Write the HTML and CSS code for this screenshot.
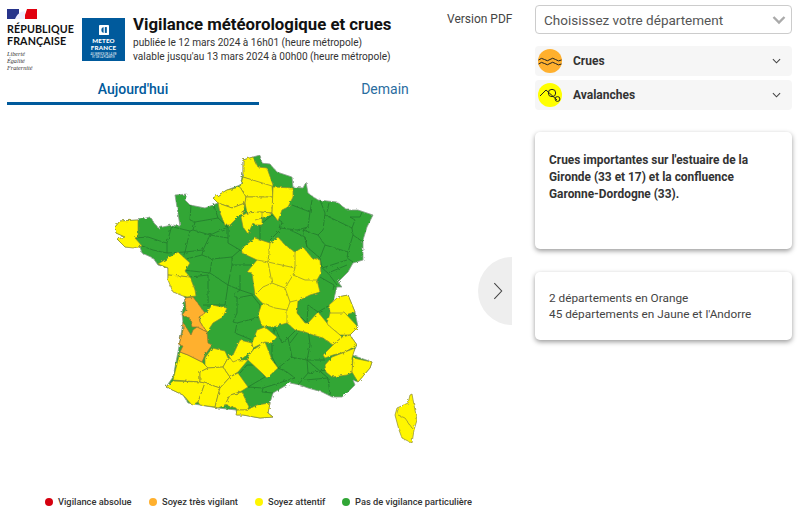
FILE: index.html
```html
<!DOCTYPE html>
<html lang="fr">
<head>
<meta charset="utf-8">
<title>Vigilance météorologique et crues</title>
<link rel="stylesheet" href="styles.css">
</head>
<body>
<div class="page">
  <main class="left">
    <header class="head">
      <div class="rf">
        <svg class="flag" viewBox="0 0 30 10"><rect width="12" height="10" fill="#27348b"/><rect x="12" width="6" height="10" fill="#fff"/><rect x="18" width="12" height="10" fill="#e1000f"/><path d="M8 10 Q10 5 14 3 L18 2 L18 10Z" fill="#eef"/><path d="M18 0 L20 0 L18 6 Z" fill="#fff"/></svg>
        <div class="rf-name">RÉPUBLIQUE<br>FRANÇAISE</div>
        <div class="rf-motto">Liberté<br>Égalité<br>Fraternité</div>
      </div>
      <div class="mf">
        <svg class="mf-icon" viewBox="0 0 12 12"><rect width="12" height="12" rx="1" fill="#fff"/><path d="M5.5 2.5 A3.6 3.6 0 0 0 5.5 9.5 Z" fill="#005a9c"/><rect x="7" y="2.5" width="2.4" height="7" fill="#005a9c"/></svg>
        <div class="mf-name">METEO<br>FRANCE</div>
        <div class="mf-tag">AU SERVICE DE LA VIE<br>ET DE LA PLANÈTE</div>
      </div>
      <div class="titles">
        <h1>Vigilance météorologique et crues</h1>
        <p>publiée le 12 mars 2024 à 16h01 (heure métropole)</p>
        <p>valable jusqu'au 13 mars 2024 à 00h00 (heure métropole)</p>
      </div>
      <a class="pdf">Version PDF</a>
    </header>
    <nav class="tabs">
      <div class="tab active">Aujourd'hui</div>
      <div class="tab">Demain</div>
    </nav>
    <div class="map-wrap">
      <svg class="map" viewBox="0 105 512 384">
        <defs>
          <filter id="rough" x="0" y="0" width="100%" height="100%" filterUnits="objectBoundingBox">
            <feTurbulence type="fractalNoise" baseFrequency="0.28" numOctaves="2" seed="4" result="n"/>
            <feDisplacementMap in="SourceGraphic" in2="n" scale="3"/>
          </filter>
        </defs>
        <g class="rough">
        <polygon class="green" points="115,227 120,221 138,220 150,217 158,228 172,225 180,226 175,195 187,194 185,200 190,205 205,208 218,203 213,198 227,190 240,185 243,173 243,160 253,157 260,155 262,163 270,164 277,172 292,177 293,187 303,188 306,182 308,193 318,200 337,202 347,210 358,210 373,215 367,227 363,240 363,260 353,263 348,272 338,282 342,287 337,287 333,302 338,297 348,295 355,312 358,327 350,335 357,345 352,355 372,362 370,368 358,382 353,380 355,385 347,393 342,397 332,397 322,392 308,388 300,385 290,383 273,393 270,403 268,413 273,417 260,418 243,415 237,415 236,410 218,408 200,405 188,403 183,395 166,387 173,377 178,352 183,323 182,313 185,298 180,290 168,280 168,268 158,265 153,258 142,253 140,247 125,247 117,239 125,237 116,233"/>
        <g class="dept">
          <polyline points="135,238 148,237 163,242 167,243 172,225"/>
          <polyline points="167,243 167,253 185,252 190,231 173,227"/>
          <polyline points="142,246 153,250 167,253"/>
          <polyline points="191,205 190,220 195,222 218,218 213,203"/>
          <polyline points="195,222 193,230 210,235 228,227 218,218"/>
          <polyline points="190,231 193,230"/>
          <polyline points="210,235 203,250 185,252 182,260 202,255 212,259"/>
          <polyline points="203,250 202,255"/>
          <polyline points="210,235 228,238 228,243 240,250 232,257 212,259 210,273 183,270"/>
          <polyline points="228,227 228,238"/>
          <polyline points="210,273 228,285 232,265 232,257"/>
          <polyline points="232,265 253,265"/>
          <polyline points="190,277 208,275 208,303"/>
          <polyline points="228,285 225,305"/>
          <polyline points="228,285 240,290 233,295 237,298 252,295 260,305 260,317 237,323 233,322"/>
          <polyline points="240,275 240,290 255,295"/>
          <polyline points="237,298 237,313 233,322"/>
          <polyline points="203,305 212,305 225,305"/>
          <polyline points="237,323 235,333 252,340"/>
          <polyline points="272,215 260,225 260,243"/>
          <polyline points="272,215 282,222 280,230 270,240"/>
          <polyline points="292,205 310,212 312,200"/>
          <polyline points="310,212 308,227 297,230 280,228"/>
          <polyline points="308,227 303,230 318,235 323,230 325,213 320,200"/>
          <polyline points="327,212 329,203"/>
          <polyline points="325,215 352,228 355,220 350,217 360,217 362,212"/>
          <polyline points="318,235 325,245 348,252 353,235 352,228"/>
          <polyline points="353,235 363,242"/>
          <polyline points="348,252 347,258 353,262"/>
          <polyline points="325,245 320,258 307,247 303,230"/>
          <polyline points="290,230 305,237 307,247"/>
          <polyline points="320,258 322,268 347,260"/>
          <polyline points="322,268 328,273 347,265"/>
          <polyline points="328,273 337,285"/>
          <polyline points="320,277 334,285 333,290"/>
          <polyline points="298,300 297,313 307,323 308,305 318,312 330,305"/>
          <polyline points="308,328 310,345 307,360 325,360"/>
          <polyline points="290,343 300,330"/>
          <polyline points="290,357 307,360 308,373 298,385"/>
          <polyline points="326,370 308,373"/>
          <polyline points="307,360 328,378 330,395"/>
          <polyline points="305,380 328,378"/>
          <polyline points="272,343 275,328"/>
          <polyline points="275,328 282,343 288,338 298,328"/>
          <polyline points="272,343 272,357 278,368 287,372 295,378 263,388 248,387"/>
          <polyline points="288,338 292,357 278,368"/>
          <polyline points="263,388 262,392 273,393"/>
          <polyline points="240,373 247,365 257,365 260,368 265,377 248,387"/>
        </g>
        <g class="yellow">
          <polygon points="115,227 120,221 138,220 138,237 135,238 142,246 133,248 125,247 117,239 125,237 116,233"/>
          <polygon points="243,160 253,157 258,167 267,168 273,185 272,187 243,177"/>
          <polygon points="243,177 272,186 273,197 246,197 240,187"/>
          <polygon points="213,198 227,190 240,187 246,197 245,203 232,208 218,203"/>
          <polygon points="218,203 232,208 245,203 243,214 240,215 230,225 225,225 220,213"/>
          <polygon points="246,197 273,197 272,213 260,212 247,213 245,203"/>
          <polygon points="273,187 293,188 293,197 288,207 282,210 278,221 272,213"/>
          <polygon points="243,215 247,213 260,212 272,213 262,218 262,225 255,225 253,223 248,234 243,227 241,217"/>
          <polygon points="242,248 255,238 270,243 278,237 285,245 295,252 303,247 312,258 320,260 321,273 317,280 320,292 310,295 298,301 297,313 305,323 308,323 318,312 327,323 337,332 342,337 333,345 323,338 313,335 305,332 295,330 287,323 273,327 262,326 258,315 262,303 255,295 252,273 247,272 257,260 242,253"/>
          <polygon points="329,305 338,297 348,295 355,312 345,315 340,317 330,313"/>
          <polygon points="327,323 330,313 337,313 345,313 358,327 350,335 340,335 328,325"/>
          <polygon points="342,337 350,335 357,345 345,352 333,355 325,358 323,355 333,345"/>
          <polygon points="325,365 332,357 345,352 355,348 352,358 353,372 347,375 332,377 326,372"/>
          <polygon points="353,358 372,362 370,368 358,382 352,372"/>
          <polygon points="158,264 178,252 190,263 185,271 190,277 180,276 168,275 168,268"/>
          <polygon points="168,275 180,276 190,277 195,290 196,296 187,297 183,296 173,292 168,280"/>
          <polygon points="200,313 207,312 212,305 227,308 223,317 213,323 207,332 200,322"/>
          <polygon points="180,352 188,355 198,360 202,362 205,365 208,368 200,372 200,382 173,380 178,360"/>
          <polygon points="166,387 173,381 200,382 205,383 198,402 192,405 183,395"/>
          <polygon points="205,358 212,348 225,351 228,358 223,367 208,368 205,365"/>
          <polygon points="200,372 208,368 223,367 230,377 220,388 205,383 200,382"/>
          <polygon points="205,383 220,388 218,395 215,407 200,405 198,402"/>
          <polygon points="223,367 228,358 240,360 248,360 238,372 230,377"/>
          <polygon points="220,388 230,377 238,373 248,387 240,392 230,395 225,405 218,408 215,407 218,395"/>
          <polygon points="225,405 230,395 242,392 249,407 247,410 237,410 236,408"/>
          <polygon points="237,410 247,410 257,405 270,403 268,413 273,417 260,418 243,415 236,415"/>
          <polygon points="233,355 240,340 252,343 253,350 243,358 233,362 228,355"/>
          <polygon points="252,343 257,330 265,327 277,337 272,343 265,342 253,348"/>
          <polygon points="247,358 253,350 265,342 272,360 278,368 267,378 262,373 248,360"/>
          <polygon points="412,394 414,405 417,420 414,430 412,443 402,438 399,430 395,415 397,408 408,403 410,395"/>
        </g>
        <g class="inner">
          <polyline points="270,243 268,262"/>
          <polyline points="257,260 268,262 295,268 295,252"/>
          <polyline points="268,262 272,283 285,288 293,275 295,268"/>
          <polyline points="293,275 305,280 317,280"/>
          <polyline points="272,283 263,287 256,294"/>
          <polyline points="285,288 290,302 298,300"/>
          <polyline points="262,303 275,308 287,310 290,302"/>
          <polyline points="287,310 287,323"/>
          <polyline points="398,415 405,418 412,428"/>
          <polyline points="262,212 262,218 255,220"/>
        </g>
        <g class="orange">
          <polygon points="185,298 193,297 205,313 199,317 200,322 207,332 197,327 192,327 190,318 182,315 186,310"/>
          <polygon points="183,322 191,335 193,330 197,327 207,332 208,343 212,345 205,355 202,362 198,360 188,355 180,352 183,346 179,345 183,330"/>
        </g>
        </g>
      </svg>
      <button class="next" type="button" aria-label="Suivant">
        <svg class="next-icon" viewBox="0 0 12 22"><path d="M1.5 1.5 L10.5 11 L1.5 20.5"/></svg>
      </button>
    </div>
    <ul class="legend">
      <li><span class="dot dot-red"></span>Vigilance absolue</li>
      <li><span class="dot dot-orange"></span>Soyez très vigilant</li>
      <li><span class="dot dot-yellow"></span>Soyez attentif</li>
      <li><span class="dot dot-green"></span>Pas de vigilance particulière</li>
    </ul>
  </main>
  <aside class="side">
    <div class="select">
      <span>Choisissez votre département</span>
      <svg class="select-chev" viewBox="0 0 14 10"><path d="M1.5 2 L7 7.5 L12.5 2"/></svg>
    </div>
    <div class="accordions">
      <div class="acc">
        <svg class="acc-icon" viewBox="0 0 24 24"><circle cx="12" cy="12" r="12" fill="#ffb02e"/><path class="ico-line" d="M0.5 11 Q3.5 8 6.5 10.5 T12 10.5 T17.5 10.5 T23.5 11 M0.5 15 Q3.5 12 6.5 14.5 T12 14.5 T17.5 14.5 T23.5 15"/></svg>
        <span class="acc-label">Crues</span>
        <svg class="acc-chev" viewBox="0 0 10 6"><path d="M1 1 L5 5 L9 1"/></svg>
      </div>
      <div class="acc">
        <svg class="acc-icon" viewBox="0 0 24 24"><circle cx="12" cy="12" r="12" fill="#ffff00"/><path class="ico-line" d="M2 13 L8 7 L19 17"/><circle class="ico-line" cx="14" cy="10" r="3.7"/><circle class="ico-line" cx="19.5" cy="16" r="2.4"/></svg>
        <span class="acc-label">Avalanches</span>
        <svg class="acc-chev" viewBox="0 0 10 6"><path d="M1 1 L5 5 L9 1"/></svg>
      </div>
    </div>
    <section class="card card-main">Crues importantes sur l'estuaire de la Gironde (33 et 17) et la confluence Garonne-Dordogne (33).</section>
    <section class="card card-sum">2 départements en Orange<br>45 départements en Jaune et l'Andorre</section>
  </aside>
</div>
</body>
</html>
```
FILE: styles.css
```css
* { box-sizing: border-box; }
html, body { margin: 0; padding: 0; background: #fff; }
body { font-family: Roboto, "Liberation Sans", sans-serif; color: #333; width: 798px; height: 520px; overflow: hidden; }
.page { display: flex; align-items: flex-start; }
.left { width: 535px; flex: none; }
.side { width: 257px; flex: none; padding-top: 5px; }

.head { display: flex; height: 76px; padding-left: 7px; }
.rf { width: 75px; flex: none; padding-top: 9px; }
.flag { display: block; width: 30px; height: 10px; }
.rf-name { font-family: Lato, "Open Sans", sans-serif; font-weight: 700; font-size: 10.7px; line-height: 12px; letter-spacing: .1px; color: #111; margin-top: 4px; }
.rf-motto { font-family: "Liberation Serif", serif; font-style: italic; font-size: 6.2px; line-height: 6.8px; color: #333; margin-top: 4px; }
.mf { width: 43px; height: 43px; flex: none; margin-top: 18px; background: #005a9c; color: #fff; display: flex; flex-direction: column; align-items: center; padding-top: 7px; }
.mf-icon { width: 10px; height: 10px; display: block; }
.mf-name { font-family: Lato, sans-serif; font-weight: 900; font-size: 6.2px; line-height: 7px; text-align: center; margin-top: 2px; letter-spacing: .2px; }
.mf-tag { font-size: 2.6px; line-height: 3px; text-align: center; margin-top: 2px; white-space: nowrap; }
.titles { width: 312px; flex: none; margin-left: 8px; padding-top: 14px; }
.titles h1 { margin: 0 0 1px; font-size: 16.8px; line-height: 21px; font-weight: 700; color: #111; white-space: nowrap; }
.titles p { margin: 0; font-size: 10.1px; line-height: 14px; color: #333; white-space: nowrap; }
.pdf { font-size: 12px; line-height: 14px; color: #444; margin-top: 12px; margin-left: 2px; white-space: nowrap; }

.tabs { display: flex; width: 504px; margin-left: 7px; height: 29px; }
.tab { width: 252px; text-align: center; font-size: 14px; line-height: 27px; color: #2a6d9f; }
.tab.active { color: #005a9c; font-weight: 500; border-bottom: 3px solid #005a9c; }

.map-wrap { position: relative; height: 384px; }
.map { display: block; width: 512px; height: 384px; }
.rough { filter: url(#rough); }
.green { fill: #31a636; stroke: #8e9c8e; stroke-width: .8; stroke-linejoin: round; }
.dept polyline { fill: none; stroke: #247a2b; stroke-width: .8; stroke-linejoin: round; }
.yellow polygon { fill: #fff600; stroke: #8a8a35; stroke-width: .7; stroke-linejoin: round; }
.inner polyline { fill: none; stroke: #8a8a35; stroke-width: .7; }
.orange polygon { fill: #ffb02e; stroke: #94772f; stroke-width: .7; stroke-linejoin: round; }

.next { position: absolute; left: 478px; top: 152px; width: 34px; height: 68px; padding: 0 0 0 15px; border: 0; background: #eee; border-radius: 34px 0 0 34px; display: flex; align-items: center; }
.next-icon { width: 10px; height: 18px; fill: none; stroke: #444; stroke-width: 1.3; display: block; }

.legend { list-style: none; margin: 6px 0 0; padding: 0; display: flex; font-size: 9.3px; line-height: 14px; font-weight: 500; color: #333; white-space: nowrap; }
.legend li { display: flex; align-items: center; }
.legend li:nth-child(1) { margin-left: 45px; width: 104px; }
.legend li:nth-child(2) { width: 106px; }
.legend li:nth-child(3) { width: 87px; }
.dot { width: 8px; height: 8px; border-radius: 50%; margin-right: 5px; flex: none; }
.dot-red { background: #d5000f; }
.dot-orange { background: #ffb02e; }
.dot-yellow { background: #fff600; }
.dot-green { background: #31a636; }

.select { height: 29px; border: 1px solid #ccc; border-radius: 4px; display: flex; align-items: center; justify-content: space-between; padding: 0 5px 0 8px; font-size: 13.5px; color: #555; }
.select-chev { width: 14px; height: 10px; fill: none; stroke: #aaa; stroke-width: 2.4; }
.accordions { margin-top: 12px; display: flex; flex-direction: column; gap: 4px; }
.acc { height: 30px; background: #f6f6f6; border-radius: 4px; display: flex; align-items: center; padding: 0 11px 0 3px; }
.acc-icon { width: 24px; height: 24px; flex: none; }
.ico-line { fill: none; stroke: #222; stroke-width: 1; }
.acc-label { font-size: 12px; font-weight: 700; color: #333; margin-left: 11px; flex: 1; }
.acc-chev { width: 9px; height: 6px; fill: none; stroke: #444; stroke-width: 1.2; }

.card { background: #fff; border-radius: 5px; box-shadow: 0 2px 5px rgba(0,0,0,.4); padding: 20px 14px; font-size: 11.9px; }
.card-main { height: 117px; margin-top: 22px; font-weight: 700; line-height: 17px; color: #333; }
.card-sum { height: 68px; margin-top: 23px; line-height: 16px; padding-top: 18px; color: #444; font-size: 11.8px; }
```
